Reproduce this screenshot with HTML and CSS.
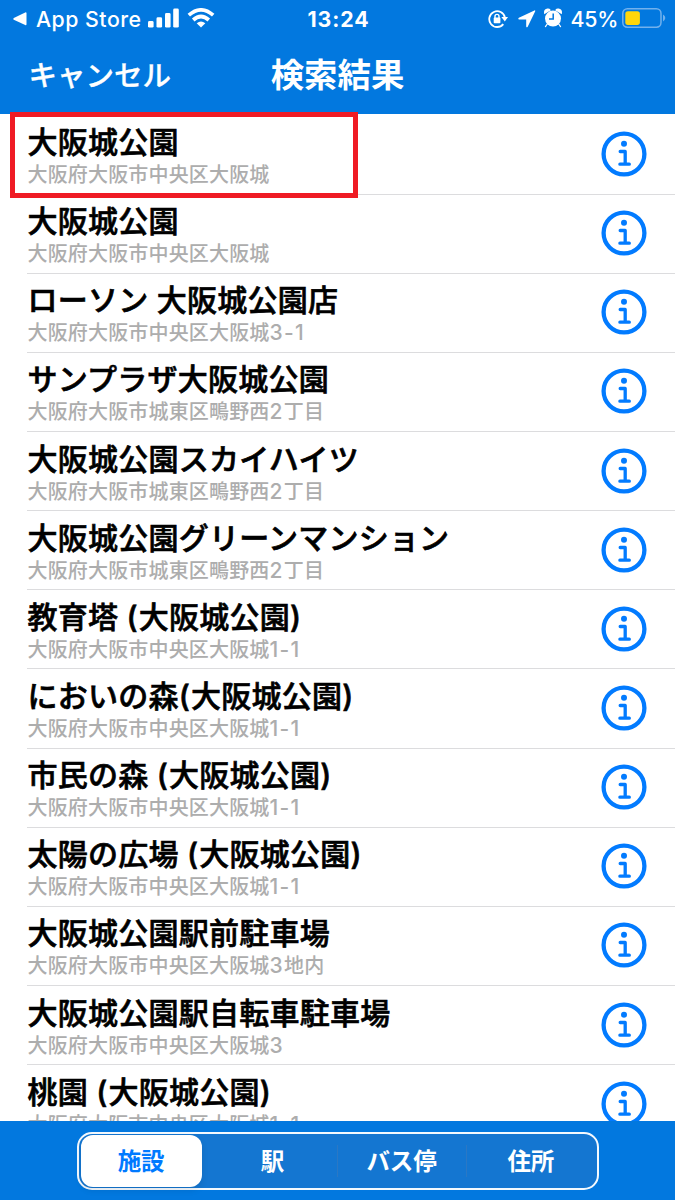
FILE: index.html
```html
<!DOCTYPE html>
<html lang="ja">
<head>
<meta charset="utf-8">
<title>検索結果</title>
<link rel="stylesheet" href="styles.css">
</head>
<body>
<svg class="defs" width="0" height="0" aria-hidden="true">
  <symbol id="info" viewBox="0 0 46 46">
    <circle cx="23" cy="23" r="20.4" fill="none" stroke="currentColor" stroke-width="4.3"/>
    <circle cx="23" cy="12.7" r="3" fill="currentColor"/>
    <path d="M19.2 20.5H24.2V33.2M18.9 33.2H28.3" fill="none" stroke="currentColor" stroke-width="3.3" stroke-linecap="round" stroke-linejoin="round"/>
  </symbol>
</svg>
<div class="screen">
  <header class="header">
    <div class="status">
      <div class="status-left">
        <svg class="back" viewBox="0 0 14 14"><path d="M0.8 6.1 12.2 .5Q13.5 0 13.5 1.4V12.2Q13.5 13.6 12.2 13L.8 7.7Q-.2 7 .8 6.1Z"/></svg>
        <span class="app">App Store</span>
        <svg class="signal" viewBox="0 0 32 20"><rect x="0" y="13" width="5.6" height="6.6" rx="1.4"/><rect x="8.5" y="9.3" width="5.6" height="10.3" rx="1.4"/><rect x="17" y="5" width="5.6" height="14.6" rx="1.4"/><rect x="25.2" y=".6" width="5.6" height="19" rx="1.4"/></svg>
        <svg class="wifi" viewBox="0 0 28 20"><g fill="none" stroke="currentColor" stroke-width="3.7"><path d="M1.8 7.2Q14-3.4 26.2 7.2"/><path d="M6.2 12Q14 5 21.8 12"/></g><path d="M14 19.6 9.7 15.3Q14 11.8 18.3 15.3Z"/></svg>
      </div>
      <span class="time">13:24</span>
      <div class="status-right">
        <svg class="lock" viewBox="0 0 20 20"><path d="M15.3 15.1A7.9 7.9 0 1 1 16.9 8.5" fill="none" stroke="currentColor" stroke-width="1.8"/><path d="M13.4 8H20L16.8 12.4Z"/><rect x="5.7" y="8.6" width="6.7" height="5.6" rx=".8"/><path d="M7 9V7.2Q7 5.4 9 5.4T11 7.2V9" fill="none" stroke="currentColor" stroke-width="1.4"/></svg>
        <svg class="arrow" viewBox="0 0 18 18"><path d="M16.4.4.9 7.8Q-.4 9 1.1 9.4H8.2V16.4Q8.6 18 9.7 16.7L17.2 1.2Q17.6.1 16.4.4Z"/></svg>
        <svg class="alarm" viewBox="0 0 18 20"><circle cx="9" cy="10.6" r="8"/><path d="M.7 5.2Q.2 1.6 3.5 1.1 5.3.9 6 2ZM17.3 5.2Q17.8 1.6 14.5 1.1 12.7.9 12 2ZM3.2 16 1.5 18.6M14.8 16 16.5 18.6" stroke="currentColor" stroke-width="1.2" stroke-linecap="round"/><path class="hands" d="M9.2 5.5V11H5"/></svg>
        <span class="percent">45%</span>
        <svg class="battery" viewBox="0 0 44 20"><rect x=".8" y=".8" width="38.2" height="18.4" rx="4.6" fill="none" stroke="#72b1ed" stroke-width="1.5"/><path d="M41 6.6Q43.3 8 43.3 10T41 13.4Z" fill="#72b1ed"/><rect x="3.3" y="3.3" width="14.6" height="13.6" rx="2.6" fill="#ffd60a"/></svg>
      </div>
    </div>
    <div class="nav"><a class="cancel">キャンセル</a><h1 class="heading">検索結果</h1></div>
  </header>
  <main class="list">
    <div class="row"><div class="text"><div class="title">大阪城公園</div><div class="addr">大阪府大阪市中央区大阪城</div></div><svg class="info"><use href="#info"/></svg><div class="highlight"></div></div>
    <div class="row"><div class="text"><div class="title">大阪城公園</div><div class="addr">大阪府大阪市中央区大阪城</div></div><svg class="info"><use href="#info"/></svg></div>
    <div class="row"><div class="text"><div class="title">ローソン 大阪城公園店</div><div class="addr">大阪府大阪市中央区大阪城<span class="num">3-1</span></div></div><svg class="info"><use href="#info"/></svg></div>
    <div class="row"><div class="text"><div class="title">サンプラザ大阪城公園</div><div class="addr">大阪府大阪市城東区鴫野西<span class="num">2</span>丁目</div></div><svg class="info"><use href="#info"/></svg></div>
    <div class="row"><div class="text"><div class="title">大阪城公園スカイハイツ</div><div class="addr">大阪府大阪市城東区鴫野西<span class="num">2</span>丁目</div></div><svg class="info"><use href="#info"/></svg></div>
    <div class="row"><div class="text"><div class="title">大阪城公園グリーンマンション</div><div class="addr">大阪府大阪市城東区鴫野西<span class="num">2</span>丁目</div></div><svg class="info"><use href="#info"/></svg></div>
    <div class="row"><div class="text"><div class="title">教育塔 <span class="paren">(</span>大阪城公園<span class="paren">)</span></div><div class="addr">大阪府大阪市中央区大阪城<span class="num">1-1</span></div></div><svg class="info"><use href="#info"/></svg></div>
    <div class="row"><div class="text"><div class="title">においの森<span class="paren">(</span>大阪城公園<span class="paren">)</span></div><div class="addr">大阪府大阪市中央区大阪城<span class="num">1-1</span></div></div><svg class="info"><use href="#info"/></svg></div>
    <div class="row"><div class="text"><div class="title">市民の森 <span class="paren">(</span>大阪城公園<span class="paren">)</span></div><div class="addr">大阪府大阪市中央区大阪城<span class="num">1-1</span></div></div><svg class="info"><use href="#info"/></svg></div>
    <div class="row"><div class="text"><div class="title">太陽の広場 <span class="paren">(</span>大阪城公園<span class="paren">)</span></div><div class="addr">大阪府大阪市中央区大阪城<span class="num">1-1</span></div></div><svg class="info"><use href="#info"/></svg></div>
    <div class="row"><div class="text"><div class="title">大阪城公園駅前駐車場</div><div class="addr">大阪府大阪市中央区大阪城<span class="num">3</span>地内</div></div><svg class="info"><use href="#info"/></svg></div>
    <div class="row"><div class="text"><div class="title">大阪城公園駅自転車駐車場</div><div class="addr">大阪府大阪市中央区大阪城<span class="num">3</span></div></div><svg class="info"><use href="#info"/></svg></div>
    <div class="row"><div class="text"><div class="title">桃園 <span class="paren">(</span>大阪城公園<span class="paren">)</span></div><div class="addr">大阪府大阪市中央区大阪城<span class="num">1-1</span></div></div><svg class="info"><use href="#info"/></svg></div>
  </main>
  <footer class="footer">
    <div class="segments">
      <div class="segment selected">施設</div><div class="segment">駅</div><div class="segment divided">バス停</div><div class="segment divided">住所</div>
    </div>
  </footer>
</div>
</body>
</html>
```
FILE: styles.css
```css
* { box-sizing: border-box; }
body { margin: 0; background: #fff; font-family: Inter, "Noto Sans CJK JP", sans-serif; }
svg { display: block; flex: none; fill: currentColor; }
.defs { position: absolute; }
.screen { width: 675px; height: 1200px; display: flex; flex-direction: column; overflow: hidden; }
.header { height: 114px; flex: none; background: #0278df; color: #fff; }
.status { height: 38px; display: grid; grid-template-columns: 1fr auto 1fr; align-items: center; padding: 0 9px 0 13px; }
.status-left, .status-right { display: flex; align-items: center; }
.status-right { justify-content: flex-end; }
.back { width: 14px; height: 14px; margin-right: 9px; }
.app { font-size: 21.3px; font-weight: 500; letter-spacing: .5px; line-height: 38px; width: 105px; margin-right: 7px; white-space: nowrap; }
.signal { width: 32px; height: 20px; margin: -2px 7px 0 0; }
.wifi { width: 28px; height: 20px; margin-top: -2px; }
.time { font-size: 21.3px; font-weight: 700; letter-spacing: .9px; line-height: 38px; margin-right: 2px; }
.lock { width: 20px; height: 20px; margin-right: 10px; }
.arrow { width: 18px; height: 18px; margin-right: 8px; }
.alarm { width: 18px; height: 20px; margin: -2px 9px 0 0; }
.hands { fill: none; stroke: #0278df; stroke-width: 1.5; }
.percent { font-size: 21.3px; font-weight: 500; letter-spacing: -.3px; line-height: 38px; margin-right: 4px; }
.battery { width: 44px; height: 20px; margin-top: -2px; }
.nav { height: 76px; display: grid; grid-template-columns: 1fr auto 1fr; align-items: center; padding: 0 28px; }
.cancel { font-size: 28.5px; font-weight: 500; line-height: 76px; padding-left: .6px; -webkit-text-stroke: .3px currentColor; }
.heading { margin: 0; font-size: 33.4px; font-weight: 700; line-height: 72px; height: 74px; }
.list { position: relative; flex: none; height: 1010px; overflow: hidden; margin-top: -3px; padding-top: 4.5px; background: linear-gradient(transparent 3px, #fff 3px); }
.row { position: relative; height: 79.15px; margin-left: 27px; padding-right: 28px; border-bottom: 1px solid #dcdcde; display: flex; justify-content: space-between; align-items: center; }
.text { height: 78px; padding: 7.5px 0 0 .5px; white-space: nowrap; }
.title { font-size: 30px; font-weight: 500; -webkit-text-stroke: .65px #000; letter-spacing: .24px; line-height: 38px; color: #000; }
.paren { letter-spacing: 1.3px; }
.addr { font-size: 20px; font-weight: 500; letter-spacing: .17px; line-height: 28px; color: #adadad; }
.num { font-size: 21px; line-height: 1; letter-spacing: 1.3px; }
.info { width: 46px; height: 46px; margin-top: -1px; color: #027bff; }
.highlight { position: absolute; left: -17px; top: -3.6px; width: 348px; height: 86px; border: 5px solid #ef1b24; z-index: 1; }
.footer { flex: 1; background: #0278df; display: flex; justify-content: center; padding-top: 10.5px; }
.segments { width: 522px; height: 58px; border: 2px solid #f4f9fe; border-radius: 15px; background: #1476d1; display: grid; grid-template-columns: repeat(4, 1fr); align-items: center; color: #fff; font-size: 23.5px; font-weight: 700; line-height: 53px; text-align: center; padding: 0 1px 0 0; }
.segment { height: 52px; }
.selected { background: #fff; color: #007aff; border-radius: 12px; margin: 0 6px 0 2px; box-shadow: 0 3px 7px #00000018; }
.divided { background: linear-gradient(#2b78c4, #2b78c4) 0 50% / 1px 32px no-repeat; }
```
